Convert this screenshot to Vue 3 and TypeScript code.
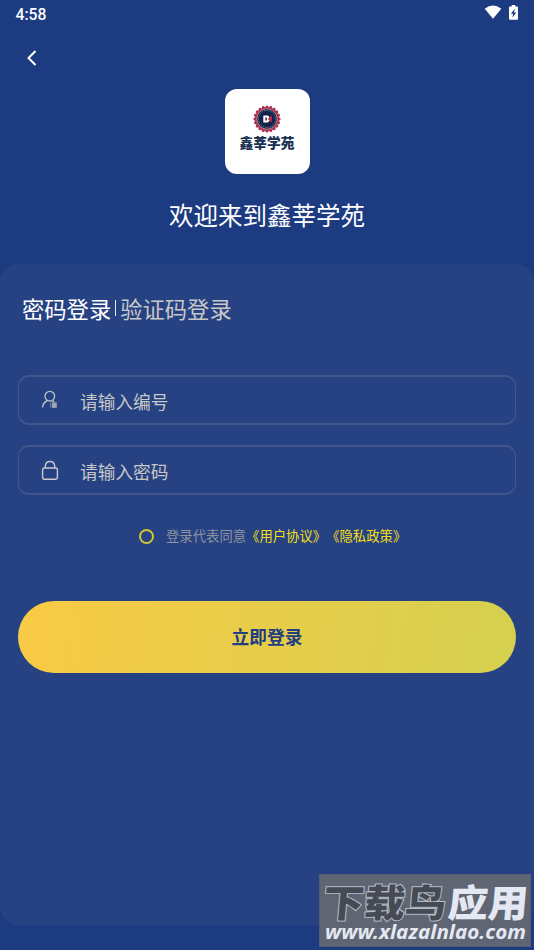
<script setup lang="ts">
import { ref } from 'vue'

type LoginMode = 'password' | 'code'

const mode = ref<LoginMode>('password')
const account = ref('')
const password = ref('')
const agreed = ref(false)
const teeth: number[] = Array.from({ length: 20 }, (_, i) => i * 18)
</script>

<template>
  <main class="screen">
    <header class="status">
      <span>4:58</span>
      <div class="status-icons">
        <svg width="18" height="14" viewBox="0 0 18 14">
          <path d="M.7 3.7Q9-2.6 17.3 3.7L9 13.8Z" fill="#fff" />
        </svg>
        <svg width="9" height="15" viewBox="0 0 9 15">
          <path d="M2.7 0h3.6v1.5H8q1 0 1 1v11.3q0 1-1 1H1q-1 0-1-1V2.500q0-1 1-1h1.700Z" fill="#fff" />
          <path d="M5.700 3.800 1.900 8.800h2.200l-.6 4 3.700-5.200H5Z" fill="#1c3b81" />
        </svg>
      </div>
    </header>

    <nav class="nav">
      <button class="back" aria-label="返回">
        <svg width="12" height="18" viewBox="0 0 12 18" fill="none" stroke="#fff" stroke-width="2">
          <path d="M9.500 2 2.500 9l7 7" />
        </svg>
      </button>
    </nav>

    <section class="brand">
      <div class="logo">
        <svg class="seal" width="28" height="28" viewBox="0 0 28 28">
          <circle
            v-for="angle in teeth"
            :key="angle"
            cx="14"
            cy="1.900"
            r="1.500"
            fill="#a83550"
            :transform="`rotate(${angle} 14 14)`"
          />
          <circle cx="14" cy="14" r="12.100" fill="#b42d49" />
          <circle cx="14" cy="14" r="10.200" fill="#142448" stroke="#d9c3ce" stroke-width=".6" />
          <circle cx="14" cy="14" r="8.500" fill="none" stroke="#777d99" stroke-width="1" stroke-dasharray="1.300 1" />
          <circle cx="14" cy="14" r="7.200" fill="#142448" />
          <path d="M10.300 10.500h4.500l2 2v3l-2 2h-4.500Z" fill="#fff" />
          <path d="M12.300 12.600h1.500v2.800h-1.500Z" fill="#142448" />
          <path d="m14.800 14 4-3.700v7.400Z" fill="#c92743" />
        </svg>
        <span class="logo-name">鑫莘学苑</span>
      </div>
      <h1>欢迎来到鑫莘学苑</h1>
    </section>

    <section class="panel">
      <div class="tabs">
        <button :class="{ active: mode === 'password' }" @click="mode = 'password'">密码登录</button>
        <i class="divider"></i>
        <button :class="{ active: mode === 'code' }" @click="mode = 'code'">验证码登录</button>
      </div>

      <form @submit.prevent>
        <label class="field">
          <svg width="18" height="20" viewBox="0 0 18 20" fill="none" stroke="#bec2c9" stroke-width="1.300">
            <circle cx="8.800" cy="6.200" r="4.800" />
            <path d="M6.600 10.400Q2 12.600 1.500 17.500M11 10.400l2.200 1.500" />
            <path d="M9.500 12.500v5" stroke-width=".7" opacity=".7" />
            <path d="M10.800 12.400h5v5.500h-5Z" fill="#9da5b7" stroke="none" />
          </svg>
          <input v-model="account" type="text" placeholder="请输入编号" />
        </label>
        <label class="field">
          <svg width="18" height="20" viewBox="0 0 18 20" fill="none" stroke="#c8cacf" stroke-width="1.400">
            <rect x="1.600" y="8" width="14.800" height="11.200" rx="1.700" />
            <path d="M4.300 8V6Q4.700 1.500 9 1.500T13.700 6v2" />
          </svg>
          <input v-model="password" type="password" placeholder="请输入密码" />
        </label>

        <div class="agreement">
          <button
            type="button"
            class="radio"
            :class="{ checked: agreed }"
            aria-label="同意"
            @click="agreed = !agreed"
          ></button>
          <p>登录代表同意<a>《用户协议》</a><a>《隐私政策》</a></p>
        </div>

        <button class="submit">立即登录</button>
      </form>
    </section>

    <aside class="watermark">
      <svg width="212" height="73" viewBox="0 0 212 73">
        <g class="wm-name" transform="translate(0 43) skewX(-5)">
          <text class="wm-dark" x="3" y="0" textLength="123" lengthAdjust="spacingAndGlyphs">下载鸟</text>
          <text class="wm-light" x="128" y="0" textLength="80" lengthAdjust="spacingAndGlyphs">应用</text>
        </g>
        <text class="wm-url" x="6" y="65" textLength="201" lengthAdjust="spacingAndGlyphs">www.xlazalnlao.com</text>
      </svg>
    </aside>
  </main>
</template>

<style>
body {
  background: #1c3b81;
}
</style>

<style scoped>
.screen {
  position: relative;
  box-sizing: border-box;
  height: 950px;
  overflow: hidden;
  background: #1c3b81;
  color: #fff;
  font-family: "Noto Sans CJK SC", sans-serif;
}

button {
  padding: 0;
  border: 0;
  background: none;
  color: inherit;
  font: inherit;
}

.status {
  display: flex;
  justify-content: space-between;
  height: 28px;
  padding: 0 16px 0 15.500px;
  font: 500 15.700px/29px Roboto, sans-serif;
}

.status-icons {
  display: flex;
  gap: 7px;
  padding-top: 5px;
}

.nav {
  display: flex;
  align-items: center;
  height: 61px;
  padding: 0 0 2px 26px;
  box-sizing: border-box;
}

.back {
  display: flex;
}

.brand {
  display: flex;
  flex-direction: column;
  align-items: center;
  height: 175px;
}

.logo {
  display: flex;
  flex-direction: column;
  align-items: center;
  box-sizing: border-box;
  width: 85px;
  height: 85px;
  padding-top: 16px;
  border-radius: 12px;
  background: #fff;
}

.seal {
  flex: none;
}

.logo-name {
  margin-top: -1px;
  color: #183052;
  font-size: 13.7px;
  font-weight: 900;
  line-height: 20px;
  white-space: nowrap;
}

h1 {
  margin: 23px 0 0;
  font-size: 24.5px;
  font-weight: 400;
  line-height: 36px;
}

.panel {
  box-sizing: border-box;
  height: 661px;
  padding: 27px 18px 0;
  border-radius: 18px;
  background: #264282;
}

.tabs {
  display: flex;
  align-items: center;
  height: 34px;
  padding-left: 4px;
  color: #c8c8c8;
  font-size: 22.3px;
  line-height: 34px;
}

.tabs .active {
  color: #fff;
}

.divider {
  width: 1px;
  height: 16px;
  margin: 0 4px;
  background: #e4e6eb;
}

form {
  padding-top: 50px;
}

.field {
  display: flex;
  align-items: center;
  gap: 21px;
  box-sizing: border-box;
  height: 50px;
  margin-bottom: 20px;
  padding: 0 22px 0 22px;
  border: solid #435689;
  border-width: 2px 1px;
  border-radius: 11px;
}

.field svg {
  flex: none;
}

input {
  flex: 1;
  min-width: 0;
  height: 30px;
  padding: 1px 0 0;
  border: 0;
  outline: 0;
  background: none;
  color: #fff;
  font: 17.700px "Noto Sans CJK SC", sans-serif;
}

input::placeholder {
  color: #c8c8c8;
  opacity: 1;
}

.agreement {
  display: flex;
  align-items: center;
  gap: 12px;
  height: 22px;
  margin-top: 30px;
  padding-left: 121px;
}

.radio {
  box-sizing: border-box;
  flex: none;
  width: 15px;
  height: 15px;
  border: 2px solid #d3c633;
  border-radius: 50%;
}

.radio.checked {
  background: #e3d328;
}

.agreement p {
  margin: 0;
  color: #8d93a0;
  font-size: 13.350px;
  line-height: 22px;
  white-space: nowrap;
  text-spacing-trim: space-all;
}

.agreement a {
  color: #f5df14;
}

.submit {
  display: block;
  box-sizing: border-box;
  width: 100%;
  height: 72px;
  margin-top: 53.500px;
  padding-bottom: 2px;
  border-radius: 36px;
  background: linear-gradient(98deg, #f9ca45, #d5d04f);
  color: #203e80;
  font-size: 17.700px;
  font-weight: 700;
}

.watermark {
  position: absolute;
  right: 3px;
  bottom: 3px;
  box-sizing: border-box;
  width: 212px;
  height: 73px;
  background: #606573;
  box-shadow: inset 0 0 0 1px #555d70;
}

.watermark svg {
  display: block;
}

.wm-name {
  font-size: 38px;
  font-weight: 900;
}

.wm-dark {
  fill: #454a54;
  stroke: #b6bbc6;
  stroke-width: 2px;
  paint-order: stroke;
}

.wm-light {
  fill: #e4e8f2;
}

.wm-url {
  fill: #e4e8f2;
  font: italic 700 20px "Noto Sans", sans-serif;
}
</style>
